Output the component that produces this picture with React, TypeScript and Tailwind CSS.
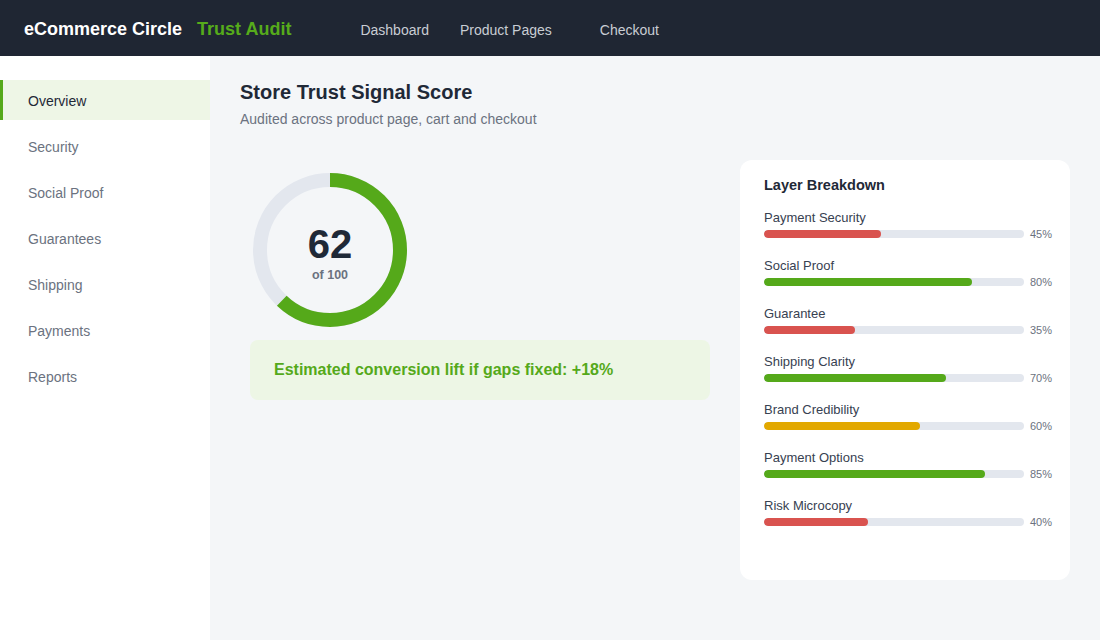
import React from 'react';

const navItems = ['Overview', 'Security', 'Social Proof', 'Guarantees', 'Shipping', 'Payments', 'Reports'];

const layers = [
  { label: 'Payment Security', value: 45, color: 'bg-[#d9534f]' },
  { label: 'Social Proof', value: 80, color: 'bg-[#55a91a]' },
  { label: 'Guarantee', value: 35, color: 'bg-[#d9534f]' },
  { label: 'Shipping Clarity', value: 70, color: 'bg-[#55a91a]' },
  { label: 'Brand Credibility', value: 60, color: 'bg-[#e2a800]' },
  { label: 'Payment Options', value: 85, color: 'bg-[#55a91a]' },
  { label: 'Risk Microcopy', value: 40, color: 'bg-[#d9534f]' },
];

function ScoreRing({ score }: { score: number }) {
  const r = 70;
  const c = 2 * Math.PI * r;
  return (
    <div className="relative w-[160px] h-[160px]">
      <svg width="160" height="160" viewBox="0 0 160 160">
        <circle cx="80" cy="80" r={r} fill="none" stroke="#e3e7ee" strokeWidth="14" />
        <circle
          cx="80"
          cy="80"
          r={r}
          fill="none"
          stroke="#55a91a"
          strokeWidth="14"
          strokeDasharray={`${(c * score) / 100} ${c}`}
          transform="rotate(-90 80 80)"
        />
      </svg>
      <div className="absolute inset-0 flex flex-col items-center pt-[54px]">
        <div className="text-[40px] leading-none font-bold text-[#1f2937]">{score}</div>
        <div className="text-[12.5px] leading-[15px] font-semibold text-[#6b7280] mt-[4px]">of 100</div>
      </div>
    </div>
  );
}

export default function App() {
  return (
    <div className="w-[1100px] h-[640px] flex flex-col font-['Liberation_Sans',Arial,sans-serif] overflow-hidden">
      <header className="h-[56px] bg-[#1f2633] flex items-baseline pt-[16px] px-[24px] shrink-0">
        <span className="text-white font-bold text-[18px]">eCommerce Circle</span>
        <span className="text-[#56ab1b] font-bold text-[18px] ml-[15px]">Trust Audit</span>
        <nav className="flex items-baseline text-[14px] text-[#c9cdd4] ml-[69px]">
          <span>Dashboard</span>
          <span className="ml-[31px]">Product Pages</span>
          <span className="ml-[48px]">Checkout</span>
        </nav>
      </header>
      <div className="flex flex-1 min-h-0">
        <aside className="w-[210px] bg-white pt-[24px] flex flex-col gap-[6px] shrink-0">
          {navItems.map((item, i) => (
            <div
              key={item}
              className={
                i === 0
                  ? 'h-[40px] flex items-center pt-[2px] pl-[25px] border-l-[3px] border-[#55a91a] bg-[#eef6e6] text-[14px] text-[#1f2937]'
                  : 'h-[40px] flex items-center pt-[2px] pl-[28px] text-[14px] text-[#6b7280]'
              }
            >
              {item}
            </div>
          ))}
        </aside>
        <main className="flex-1 bg-[#f4f6f8] px-[30px] pt-[24px]">
          <h1 className="text-[20px] leading-[24px] font-bold text-[#1f2937]">Store Trust Signal Score</h1>
          <p className="text-[14px] text-[#6b7280] mt-[5px]">Audited across product page, cart and checkout</p>
          <div className="flex gap-[20px] mt-[30px]">
            <div className="w-[480px] p-[10px]">
              <ScoreRing score={62} />
              <div className="mt-[10px] h-[60px] bg-[#edf6e5] rounded-[8px] flex items-center px-[24px]">
                <span className="text-[16px] font-bold text-[#55a91a]">Estimated conversion lift if gaps fixed: +18%</span>
              </div>
            </div>
            <div className="w-[330px] h-[420px] bg-white rounded-[12px] px-[24px] pt-[15px]">
              <h2 className="text-[14.5px] font-bold text-[#1f2937]">Layer Breakdown</h2>
              <div className="mt-[13px] flex flex-col gap-[18px]">
                {layers.map((l) => (
                  <div key={l.label}>
                    <div className="text-[13px] leading-[16px] text-[#374151]">{l.label}</div>
                    <div className="flex items-center mt-[2px]">
                      <div className="w-[260px] shrink-0 h-[8px] rounded-full bg-[#e3e7ee] overflow-hidden">
                        <div className={`h-full rounded-full ${l.color}`} style={{ width: `${l.value}%` }} />
                      </div>
                      <span className="ml-[6px] shrink-0 text-[11px] leading-[12px] text-[#6b7280]">{l.value}%</span>
                    </div>
                  </div>
                ))}
              </div>
            </div>
          </div>
        </main>
      </div>
    </div>
  );
}
